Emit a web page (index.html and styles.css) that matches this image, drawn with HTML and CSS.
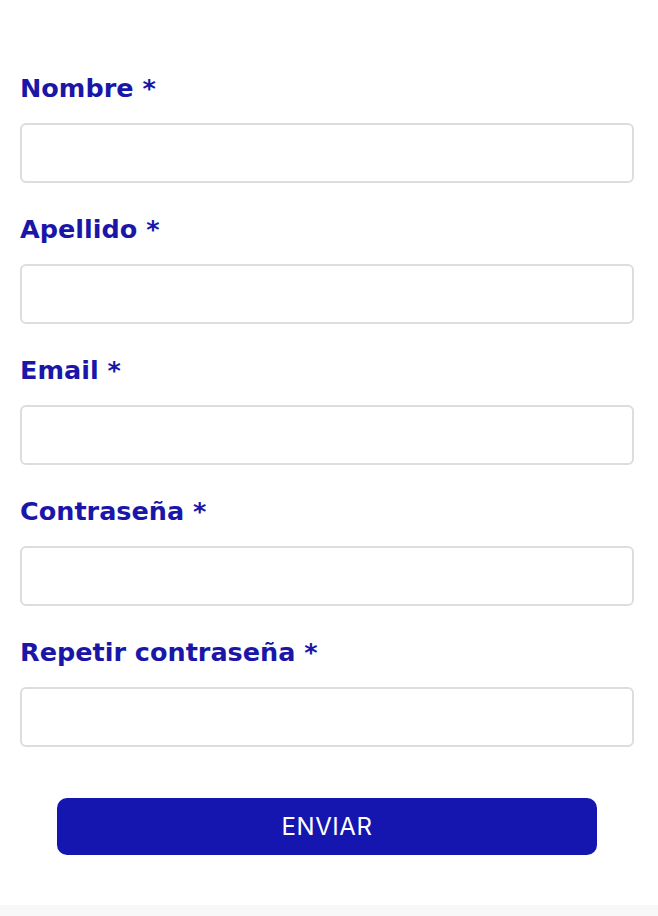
FILE: index.html
```html
<!DOCTYPE html>
<html lang="es">
<head>
<meta charset="utf-8">
<title>Registro</title>
<link rel="stylesheet" href="styles.css">
</head>
<body>
<main class="page">
  <form class="form">
    <div class="field">
      <label class="label" for="nombre">Nombre *</label>
      <input class="input" id="nombre" type="text">
    </div>
    <div class="field">
      <label class="label" for="apellido">Apellido *</label>
      <input class="input" id="apellido" type="text">
    </div>
    <div class="field">
      <label class="label" for="email">Email *</label>
      <input class="input" id="email" type="email">
    </div>
    <div class="field">
      <label class="label" for="pass">Contraseña *</label>
      <input class="input" id="pass" type="password">
    </div>
    <div class="field">
      <label class="label" for="pass2">Repetir contraseña *</label>
      <input class="input" id="pass2" type="password">
    </div>
    <div class="actions">
      <button class="button" type="button">ENVIAR</button>
    </div>
  </form>
  <div class="footer-band"></div>
</main>
</body>
</html>
```
FILE: styles.css
```css
* { box-sizing: border-box; }
html, body { margin: 0; padding: 0; background: #ffffff; }
.page {
  width: 658px;
  height: 916px;
  display: flex;
  flex-direction: column;
  overflow: hidden;
}
.form {
  padding: 73px 24px 0 20px;
  display: flex;
  flex-direction: column;
  gap: 31px;
  flex: 1;
}
.field {
  display: flex;
  flex-direction: column;
  gap: 20px;
}
.label {
  font-family: "DejaVu Sans", Inter, sans-serif;
  font-weight: 700;
  font-size: 25.5px;
  line-height: 30px;
  color: #1a17a8;
}
.input {
  display: block;
  width: 614px;
  height: 60px;
  border: 2px solid #dcdde1;
  border-radius: 6px;
  background: #fff;
  margin: 0;
  padding: 0 14px;
  font-size: 18px;
}
.actions {
  display: flex;
  padding: 20px 37px 0 37px;
}
.button {
  width: 540px;
  height: 57px;
  border: none;
  border-radius: 10px;
  background: #1515b0;
  color: #ffffff;
  font-family: Inter, "Noto Sans", sans-serif;
  font-weight: 400;
  font-size: 24px;
  letter-spacing: 0.6px;
  cursor: pointer;
}
.footer-band {
  height: 11px;
  background: #f8f8f8;
  flex: none;
}
```
